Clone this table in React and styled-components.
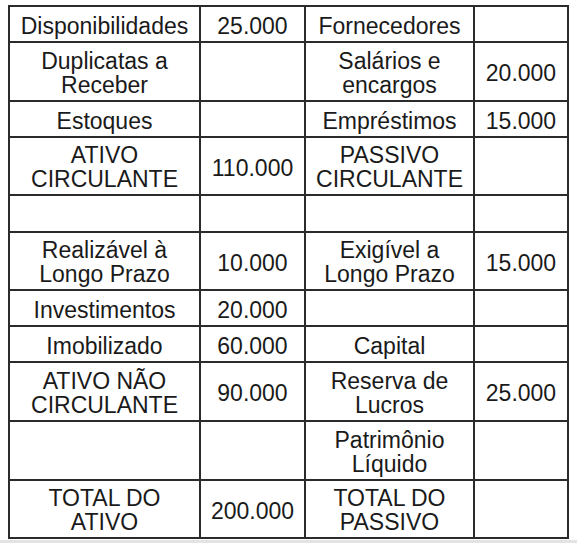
import React from "react";
import styled, { createGlobalStyle } from "styled-components";

const Global = createGlobalStyle`
  html, body { margin: 0; padding: 0; background: #ffffff; }
  body { font-family: "Liberation Sans", Arial, sans-serif; }
`;

const Page = styled.div`
  width: 577px;
  height: 543px;
  display: flex;
  flex-direction: column;
  background: #ffffff;
`;

const Frame = styled.div`
  padding: 5px 8px 0 8px;
  flex: 1;
`;

const Grid = styled.div`
  display: grid;
  grid-template-columns: 189px 103px 167px 92px;
  grid-template-rows: 34px 57px 34px 56px 35px 56px 34px 34px 57px 57px 56px;
  gap: 2px;
  padding: 2px;
  background: #2b2b2b;
  width: max-content;
`;

const Cell = styled.div`
  background: #ffffff;
  display: flex;
  align-items: center;
  justify-content: center;
  text-align: center;
  color: #1a1a1a;
  font-family: "Liberation Sans", Arial, sans-serif;
  font-size: 23px;
  line-height: 24px;
  padding-top: ${(p) => (p.$two ? "2px" : "3px")};
  box-sizing: border-box;
  white-space: nowrap;
`;

const BottomStrip = styled.div`
  height: 3px;
  background: #e3e3e3;
`;

const rows = [
  ["Disponibilidades", "25.000", "Fornecedores", ""],
  ["Duplicatas a\nReceber", "", "Salários e\nencargos", "20.000"],
  ["Estoques", "", "Empréstimos", "15.000"],
  ["ATIVO\nCIRCULANTE", "110.000", "PASSIVO\nCIRCULANTE", ""],
  ["", "", "", ""],
  ["Realizável à\nLongo Prazo", "10.000", "Exigível a\nLongo Prazo", "15.000"],
  ["Investimentos", "20.000", "", ""],
  ["Imobilizado", "60.000", "Capital", ""],
  ["ATIVO NÃO\nCIRCULANTE", "90.000", "Reserva de\nLucros", "25.000"],
  ["", "", "Patrimônio\nLíquido", ""],
  ["TOTAL DO\nATIVO", "200.000", "TOTAL DO\nPASSIVO", ""],
];

export default function App() {
  return (
    <Page>
      <Global />
      <Frame>
        <Grid>
          {rows.map((r, i) =>
            r.map((t, j) => {
              const lines = t.split("\n");
              return (
                <Cell key={`${i}-${j}`} $two={lines.length > 1}>
                  <span>
                    {lines.map((l, k) => (
                      <React.Fragment key={k}>
                        {k > 0 && <br />}
                        {l}
                      </React.Fragment>
                    ))}
                  </span>
                </Cell>
              );
            })
          )}
        </Grid>
      </Frame>
      <BottomStrip />
    </Page>
  );
}
